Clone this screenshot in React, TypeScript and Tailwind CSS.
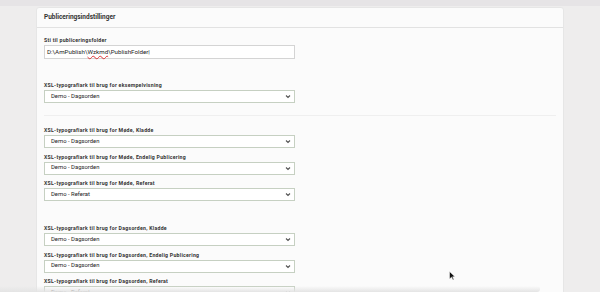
import React from "react";

const Label = ({ children }: { children: React.ReactNode }) => (
  <div className="text-[5.2px] font-bold tracking-[0.05em] text-[#333] leading-[8px] h-[8px] mb-[1px] whitespace-nowrap">{children}</div>
);

const Select = ({ value }: { value: string }) => (
  <div className="w-[251px] h-[13px] border border-[#c6d0c2] bg-white flex items-center justify-between pl-[6px] pr-[3px]">
    <span className="text-[5.9px] text-[#222] leading-none">{value}</span>
    <svg width="6" height="5" viewBox="0 0 6 5"><path d="M1 1.5 L3 3.5 L5 1.5" stroke="#555" strokeWidth="1.1" fill="none" /></svg>
  </div>
);

const Field = ({ label, value, last }: { label: string; value: string; last?: boolean }) => (
  <div className={last ? "" : "mb-[4.5px]"}>
    <Label>{label}</Label>
    <Select value={value} />
  </div>
);

export default function App() {
  return (
    <div className="w-[600px] h-[292px] bg-[#eeeded] overflow-hidden relative" style={{ fontFamily: "Roboto, 'Noto Sans', sans-serif" }}>
      <div className="h-[6px] bg-[#e6e4e6]" />
      <div className="ml-[36px] w-[528px] mt-[1px] bg-[#fbfbfb] rounded-[3px] border border-[#e6e6e6]">
        <div className="h-[20px] border-b border-[#e2e2e2] flex items-center px-[7px]">
          <span className="text-[6.5px] font-bold text-[#333]">Publiceringsindstillinger</span>
        </div>
        <div className="px-[7px] pt-[8px]">
          <Label>Sti til publiceringsfolder</Label>
          <div className="w-[251px] h-[14px] border-[1.5px] border-[#d4d4d4] bg-white flex items-center px-[2px]">
            <span className="text-[6.2px] text-[#222] leading-none">D:\AmPublish\<span className="underline decoration-wavy decoration-[#d33]">Wzkmd</span>\PublishFolder|</span>
          </div>
          <div className="h-[22px]" />
          <Field label="XSL-typografiark til brug for eksempelvisning" value="Demo - Dagsorden" last />
          <div className="mt-[12px] border-t border-[#efefef]" />
          <div className="pt-[10px]">
            <Field label="XSL-typografiark til brug for Møde, Kladde" value="Demo - Dagsorden" />
            <Field label="XSL-typografiark til brug for Møde, Endelig Publicering" value="Demo - Dagsorden" />
            <Field label="XSL-typografiark til brug for Møde, Referat" value="Demo - Referat" last />
            <div className="h-[23px]" />
            <Field label="XSL-typografiark til brug for Dagsorden, Kladde" value="Demo - Dagsorden" />
            <Field label="XSL-typografiark til brug for Dagsorden, Endelig Publicering" value="Demo - Dagsorden" />
            <Field label="XSL-typografiark til brug for Dagsorden, Referat" value="Demo - Referat" last />
          </div>
        </div>
      </div>
      <div className="absolute left-0 bottom-0 w-[540px] h-[6px] rounded-r-full bg-gradient-to-b from-transparent to-[#e4e4e4]" />
      <svg className="absolute left-[449px] top-[271px]" width="7" height="10" viewBox="0 0 7 10"><path d="M0.5 0.5 L0.5 8 L2.5 6.2 L4 9 L5 8.5 L3.6 5.8 L6 5.8 Z" fill="#111" stroke="#fff" strokeWidth="0.5" /></svg>
    </div>
  );
}
